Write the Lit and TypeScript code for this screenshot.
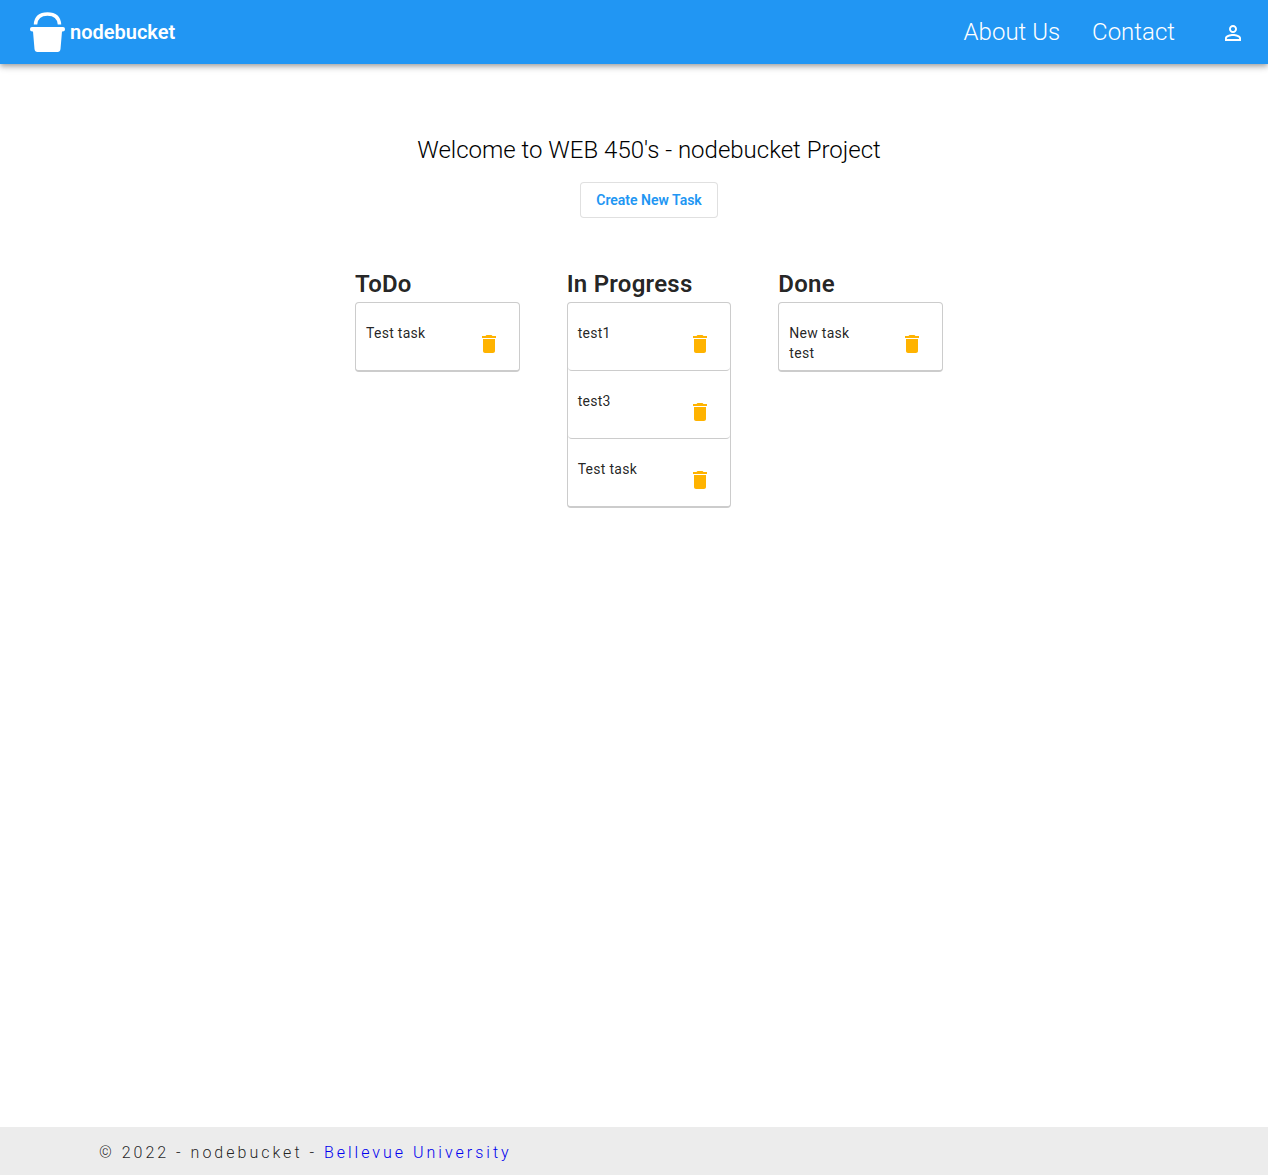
import { LitElement, html, css } from "lit";
import { customElement, property, state } from "lit/decorators.js";

interface Column {
  title: string;
  tasks: string[];
}

@customElement("task-column")
class TaskColumn extends LitElement {
  static styles = css`
    :host {
      display: block;
      min-width: 0;
    }
    .title {
      margin: 0;
      font-size: 24px;
      line-height: 36px;
      font-weight: 600;
      letter-spacing: 0.01em;
    }
    .list {
      list-style: none;
      margin: 0;
      padding: 0;
      min-height: 67px;
      border: 1px solid #ccc;
      border-bottom-width: 2px;
      border-radius: 4px;
      overflow: hidden;
    }
    .task {
      box-sizing: border-box;
      min-height: 68px;
      padding: 20px 10px 0;
      display: flex;
      justify-content: space-between;
      align-items: flex-start;
      border-bottom: 1px solid #ccc;
      border-radius: 4px;
      font-size: 14px;
      line-height: 20px;
      letter-spacing: 0.02em;
    }
    .task:last-child {
      min-height: 67px;
      border-bottom: 0;
    }
    .text {
      max-width: 70px;
    }
    .delete {
      width: 40px;
      height: 40px;
      padding: 9px 8px 7px;
      border: 0;
      background: none;
      color: #ffb300;
      cursor: pointer;
    }
    .icon {
      display: block;
      width: 24px;
      height: 24px;
      fill: currentColor;
    }
  `;

  @property() heading = "";
  @property({ attribute: false }) tasks: string[] = [];

  private remove(index: number) {
    this.dispatchEvent(new CustomEvent("remove-task", { detail: index }));
  }

  render() {
    return html`
      <h2 class="title">${this.heading}</h2>
      <ul class="list">
        ${this.tasks.map(
          (task, i) => html`
            <li class="task">
              <span class="text">${task}</span>
              <button class="delete" type="button" aria-label="Delete ${task}" @click=${() => this.remove(i)}>
                <svg class="icon" viewBox="0 0 24 24" aria-hidden="true">
                  <path d="M6 19c0 1.1.9 2 2 2h8c1.1 0 2-.9 2-2V7H6v12zM19 4h-3.5l-1-1h-5l-1 1H5v2h14V4z" />
                </svg>
              </button>
            </li>
          `
        )}
      </ul>
    `;
  }
}

@customElement("app-root")
class AppRoot extends LitElement {
  static styles = css`
    :host {
      display: flex;
      flex-direction: column;
      min-height: 100vh;
      background: #fff;
      color: rgba(0, 0, 0, 0.87);
      font-family: Roboto, "Liberation Sans", sans-serif;
    }
    .bar {
      box-sizing: border-box;
      height: 64px;
      padding: 0 15px 0 30px;
      display: flex;
      align-items: center;
      justify-content: space-between;
      background: #2196f3;
      color: #fff;
      box-shadow: 0 2px 4px -1px rgba(0, 0, 0, 0.2), 0 4px 5px 0 rgba(0, 0, 0, 0.14),
        0 1px 10px 0 rgba(0, 0, 0, 0.12);
      z-index: 1;
    }
    .brand {
      display: flex;
      align-items: center;
      gap: 5px;
      color: inherit;
      text-decoration: none;
      font-size: 20px;
      line-height: 32px;
      font-weight: 600;
    }
    .logo {
      display: block;
      width: 35px;
      height: 40px;
    }
    .nav {
      display: flex;
      align-items: center;
      gap: 32px;
    }
    .link {
      color: inherit;
      text-decoration: none;
      font-size: 24px;
      line-height: 32px;
      font-weight: 300;
    }
    .account {
      width: 40px;
      height: 40px;
      margin-left: 6px;
      padding: 9px 8px 7px;
      border: 0;
      background: none;
      color: inherit;
      cursor: pointer;
    }
    .person {
      display: block;
      width: 24px;
      height: 24px;
      fill: currentColor;
    }
    .main {
      flex: 1;
      padding: 70px 0 48px 30px;
      display: flex;
      flex-direction: column;
      align-items: center;
    }
    .welcome {
      margin: 0 0 16px;
      color: #000;
      font-size: 24px;
      line-height: 32px;
      font-weight: 300;
    }
    .create {
      height: 36px;
      padding: 0 15px;
      border: 1px solid rgba(0, 0, 0, 0.12);
      border-radius: 4px;
      background: #fff;
      color: #2196f3;
      font-family: inherit;
      font-size: 14px;
      font-weight: 600;
      cursor: pointer;
    }
    .board {
      width: 100%;
      max-width: 588px;
      margin-top: 48px;
      display: grid;
      grid-template-columns: repeat(3, minmax(0, 1fr));
      align-items: start;
      gap: 47px;
    }
    .footer {
      padding: 10px 99px 6px;
      background: #ececec;
      font-size: 16px;
      line-height: 32px;
      font-weight: 300;
      letter-spacing: 3px;
    }
    .university {
      color: #0000ee;
      text-decoration: none;
    }
  `;

  @state() private columns: Column[] = [
    { title: "ToDo", tasks: ["Test task"] },
    { title: "In Progress", tasks: ["test1", "test3", "Test task"] },
    { title: "Done", tasks: ["New task test"] },
  ];

  private removeTask(column: Column, index: number) {
    this.columns = this.columns.map((c) =>
      c === column ? { ...c, tasks: c.tasks.filter((_, i) => i !== index) } : c
    );
  }

  render() {
    return html`
      <header class="bar">
        <a class="brand" href="#">
          <svg class="logo" viewBox="0 0 35 40" aria-hidden="true">
            <path d="M5.500 12.500C6 5.500 10 2 17.500 2S29 5.500 29.500 12.500" fill="none" stroke="#fff" stroke-width="3.500" />
            <path
              d="M2 15H33Q35 15 35 17Q35 19.500 32.500 19.500H32L30.500 37Q30.200 40 27.500 40H7.500Q4.800 40 4.500 37L3 19.500H2.500Q0 19.500 0 17Q0 15 2 15Z"
              fill="#fff"
            />
          </svg>
          <span>nodebucket</span>
        </a>
        <nav class="nav">
          <a class="link" href="#about">About Us</a>
          <a class="link" href="#contact">Contact</a>
          <button class="account" type="button" aria-label="Account">
            <svg class="person" viewBox="0 0 24 24" aria-hidden="true">
              <path
                d="M12 5.900c1.160 0 2.100.94 2.100 2.100s-.94 2.100-2.100 2.100S9.900 9.160 9.900 8s.94-2.100 2.100-2.100m0 9c2.970 0 6.100 1.460 6.100 2.100v1.100H5.900V17c0-.64 3.130-2.100 6.100-2.100M12 4C9.790 4 8 5.790 8 8s1.790 4 4 4 4-1.790 4-4-1.790-4-4-4zm0 9c-2.670 0-8 1.340-8 4v3h16v-3c0-2.660-5.330-4-8-4z"
              />
            </svg>
          </button>
        </nav>
      </header>
      <main class="main">
        <h1 class="welcome">Welcome to WEB 450's - nodebucket Project</h1>
        <button class="create" type="button">Create New Task</button>
        <section class="board">
          ${this.columns.map(
            (c) => html`
              <task-column
                .heading=${c.title}
                .tasks=${c.tasks}
                @remove-task=${(e: CustomEvent<number>) => this.removeTask(c, e.detail)}
              ></task-column>
            `
          )}
        </section>
      </main>
      <footer class="footer">
        © 2022 - nodebucket - <a class="university" href="#bellevue">Bellevue University</a>
      </footer>
    `;
  }
}
